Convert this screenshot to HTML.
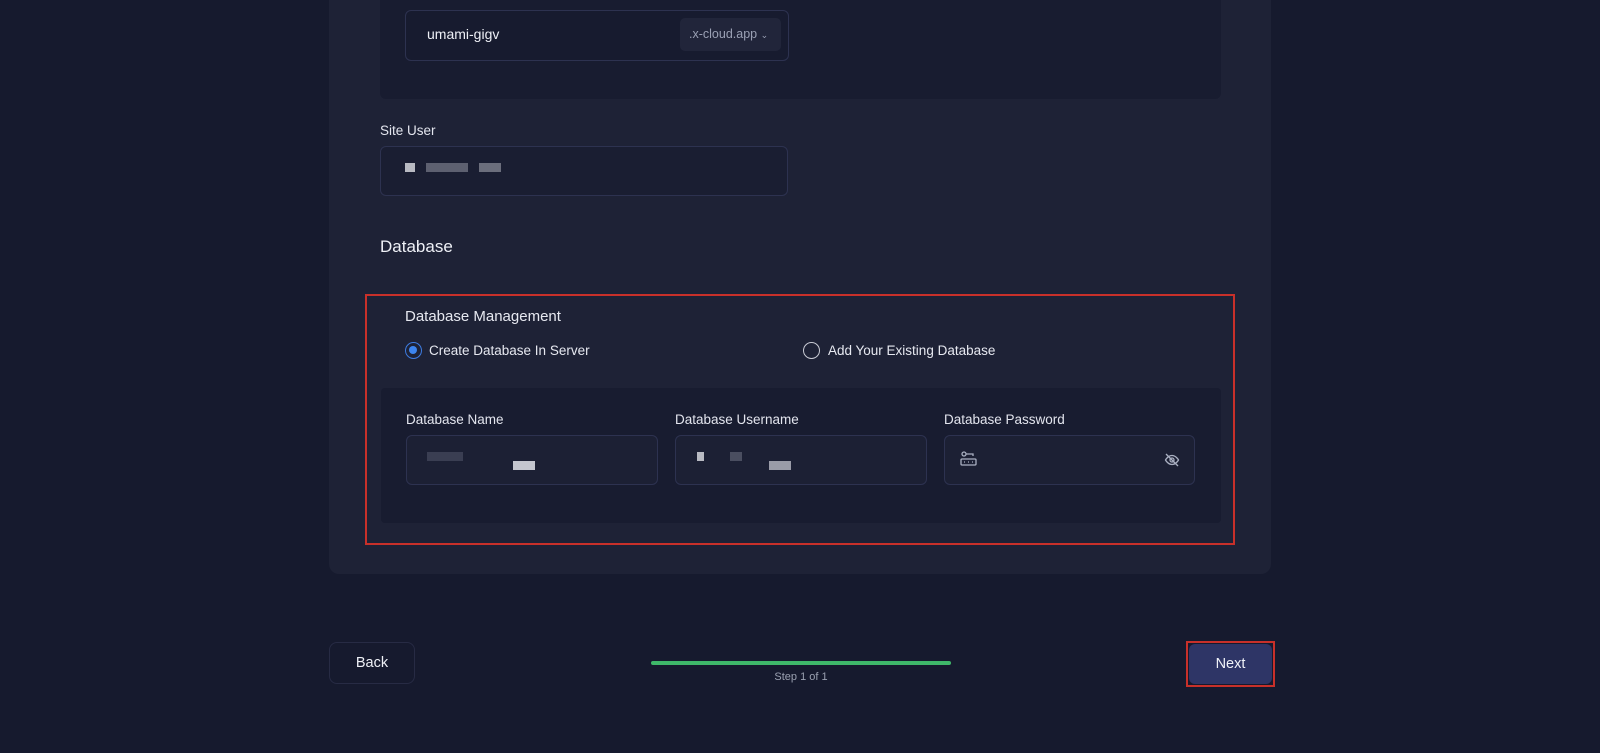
<!DOCTYPE html>
<html><head><meta charset="utf-8"><style>
*{margin:0;padding:0;box-sizing:border-box}
body{width:1600px;height:753px;background:#161a2e;font-family:"Liberation Sans",sans-serif;color:#e6e8f0;position:relative;overflow:hidden}
.a{position:absolute}
.card{left:329px;top:-20px;width:942px;height:594px;background:#1e2236;border-radius:10px}
.inp{border:1px solid #2d3250;border-radius:6px;background:#1c2034}
.lbl{font-size:13.5px;color:#e3e5ee}
.px{position:absolute;height:9px}
</style></head><body>
<div class="a card"></div>
<div class="a" style="left:380px;top:-10px;width:841px;height:109px;background:#181c30;border-radius:6px"></div>
<div class="a inp" style="left:405px;top:10px;width:384px;height:51px;background:#171b2f"></div>
<div class="a" style="left:427px;top:26px;font-size:14px;color:#eef0f6">umami-gigv</div>
<div class="a" style="left:680px;top:18px;width:101px;height:33px;background:#21253a;border-radius:5px;font-size:12.5px;color:#9aa0b4;padding:9px 0 0 9px">.x-cloud.app <span style="font-size:9px">&#8964;</span></div>
<div class="a lbl" style="left:380px;top:123px">Site User</div>
<div class="a inp" style="left:380px;top:146px;width:408px;height:50px;background:#1a1e32"></div>
<div class="px" style="left:405px;top:163px;width:10px;background:#b8bac2"></div>
<div class="px" style="left:426px;top:163px;width:42px;background:#5d6070"></div>
<div class="px" style="left:479px;top:163px;width:22px;background:#6b6e7c"></div>
<div class="a" style="left:380px;top:237px;font-size:17px;color:#eef0f6">Database</div>
<div class="a" style="left:365px;top:294px;width:870px;height:251px;border:2px solid #c8302a"></div>
<div class="a" style="left:405px;top:308px;font-size:15px;color:#e6e8f0">Database Management</div>
<div class="a" style="left:405px;top:342px;width:17px;height:17px;border-radius:50%;border:1.5px solid #3d7be0;background:#1e2236"><div style="margin:3px;width:8px;height:8px;border-radius:50%;background:#3d85ef"></div></div>
<div class="a" style="left:429px;top:343px;font-size:13.5px">Create Database In Server</div>
<div class="a" style="left:803px;top:342px;width:17px;height:17px;border-radius:50%;border:1.5px solid #c8cad4"></div>
<div class="a" style="left:828px;top:343px;font-size:13.5px">Add Your Existing Database</div>
<div class="a" style="left:381px;top:388px;width:840px;height:135px;background:#181c30;border-radius:4px"></div>
<div class="a lbl" style="left:406px;top:412px">Database Name</div>
<div class="a lbl" style="left:675px;top:412px">Database Username</div>
<div class="a lbl" style="left:944px;top:412px">Database Password</div>
<div class="a inp" style="left:406px;top:435px;width:252px;height:50px"></div>
<div class="a inp" style="left:675px;top:435px;width:252px;height:50px"></div>
<div class="a inp" style="left:944px;top:435px;width:251px;height:50px"></div>
<div class="px" style="left:427px;top:452px;width:36px;background:#3a3e52"></div>
<div class="px" style="left:513px;top:461px;width:22px;background:#c4c6cf"></div>
<div class="px" style="left:697px;top:452px;width:7px;background:#b8bac2"></div>
<div class="px" style="left:730px;top:452px;width:12px;background:#4a4e60"></div>
<div class="px" style="left:769px;top:461px;width:22px;background:#9a9ca8"></div>
<svg class="a" style="left:960px;top:451px" width="18" height="16" viewBox="0 0 18 16" fill="none" stroke="#aab0c2" stroke-width="1.3"><circle cx="4" cy="3" r="2"/><path d="M6 3h7v2"/><rect x="1" y="8" width="15" height="6" rx="1"/><path d="M4 11h1M8 11h1M12 11h1"/></svg>
<svg class="a" style="left:1164px;top:452px" width="16" height="16" viewBox="0 0 16 16" fill="none" stroke="#aab0c2" stroke-width="1.3"><path d="M1.5 8s2.5-4.5 6.5-4.5S14.5 8 14.5 8 12 12.5 8 12.5 1.5 8 1.5 8z"/><circle cx="8" cy="8" r="2"/><path d="M2 2l12 12"/></svg>
<div class="a" style="left:329px;top:642px;width:86px;height:42px;border:1px solid #272b44;border-radius:8px;font-size:14.5px;text-align:center;line-height:40px;color:#eef0f6">Back</div>
<div class="a" style="left:651px;top:661px;width:300px;height:4px;border-radius:2px;background:#3fb86a"></div>
<div class="a" style="left:651px;top:671px;width:300px;text-align:center;font-size:11px;color:#9aa0b0">Step 1 of 1</div>
<div class="a" style="left:1186px;top:641px;width:89px;height:46px;border:2px solid #c8302a"></div>
<div class="a" style="left:1189px;top:644px;width:83px;height:40px;background:#2e3566;border-radius:6px;font-size:14.5px;text-align:center;line-height:40px;color:#f0f2f8">Next</div>
</body></html>
